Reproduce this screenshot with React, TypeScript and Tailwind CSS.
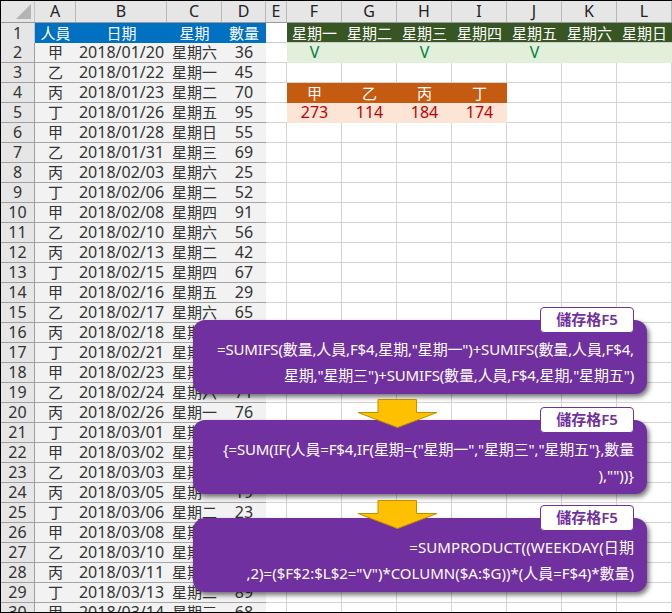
const rows = [
  ["甲", "2018/01/20", "星期六", "36"],
  ["乙", "2018/01/22", "星期一", "45"],
  ["丙", "2018/01/23", "星期二", "70"],
  ["丁", "2018/01/26", "星期五", "95"],
  ["甲", "2018/01/28", "星期日", "55"],
  ["乙", "2018/01/31", "星期三", "69"],
  ["丙", "2018/02/03", "星期六", "25"],
  ["丁", "2018/02/06", "星期二", "52"],
  ["甲", "2018/02/08", "星期四", "91"],
  ["乙", "2018/02/10", "星期六", "56"],
  ["丙", "2018/02/13", "星期二", "42"],
  ["丁", "2018/02/15", "星期四", "67"],
  ["甲", "2018/02/16", "星期五", "29"],
  ["乙", "2018/02/17", "星期六", "65"],
  ["丙", "2018/02/18", "星期日", "38"],
  ["丁", "2018/02/21", "星期三", "44"],
  ["甲", "2018/02/23", "星期五", "60"],
  ["乙", "2018/02/24", "星期六", "71"],
  ["丙", "2018/02/26", "星期一", "76"],
  ["丁", "2018/03/01", "星期四", "33"],
  ["甲", "2018/03/02", "星期五", "48"],
  ["乙", "2018/03/03", "星期六", "57"],
  ["丙", "2018/03/05", "星期一", "19"],
  ["丁", "2018/03/06", "星期二", "23"],
  ["甲", "2018/03/08", "星期四", "62"],
  ["乙", "2018/03/10", "星期六", "41"],
  ["丙", "2018/03/11", "星期日", "54"],
  ["丁", "2018/03/13", "星期二", "89"],
  ["甲", "2018/03/14", "星期三", "68"],
]

const weekdays = ["星期一", "星期二", "星期三", "星期四", "星期五", "星期六", "星期日"]
const letters = ["A", "B", "C", "D", "E", "F", "G", "H", "I", "J", "K", "L"]
const gridCols = "grid grid-cols-[34px_41px_91px_55px_44px_21px_repeat(7,55px)]"

function sideCells(row: number) {
  // the F:L block, only rows 1,2,4,5 have fills
  return weekdays.map((day, i) => {
    if (row === 1)
      return <div key={i} className="h-[19px] bg-[#375623] text-white text-center leading-[20px]">{day}</div>
    if (row === 2)
      return <div key={i} className="h-5 bg-[#e2efda] text-[#00803c] text-[16px] text-center leading-[18px]">{i % 2 === 0 && i < 5 ? "V" : ""}</div>
    if (row === 4 && i < 4)
      return <div key={i} className="h-5 bg-[#c55a11] text-white text-center leading-[20px]">{["甲", "乙", "丙", "丁"][i]}</div>
    if (row === 5 && i < 4)
      return <div key={i} className="h-5 bg-[#fce4d6] text-[#c00000] text-[16px] text-center leading-[19px]">{[273, 114, 184, 174][i]}</div>
    return <div key={i} className="h-5 border-r border-b border-[#d4d4d4]"></div>
  })
}

type Line = { text: string; tracking: string }

function Callout({ top, lines }: { top: string; lines: Line[] }) {
  return (
    <div className={`absolute left-[192px] w-[454px] h-[74px] rounded-xl bg-[#7030a0] pt-4 pr-[13px] text-right text-white text-[15px] leading-[26px] shadow-[2px_3px_5px_rgba(0,0,0,0.55)] ${top}`}>
      {lines.map((l) => (
        <div key={l.text} className={`whitespace-nowrap ${l.tracking}`}>{l.text}</div>
      ))}
      <div className="absolute right-[13px] top-[-13px] w-[94px] h-[26px] rounded-[4px] border border-[#7030a0] bg-white text-center text-[#7030a0] text-[15px] font-semibold leading-[23px]">
        儲存格F5
      </div>
    </div>
  )
}

function Arrow({ top }: { top: string }) {
  return (
    <svg className={`absolute left-[356px] ${top}`} width="82" height="30" viewBox="0 0 82 30">
      <polygon points="21,0.5 59.5,0.5 59.5,13.5 80,13.5 40.5,28.5 1,13.5 21,13.5" fill="#ffc000" stroke="#bf9000" strokeWidth="1" />
    </svg>
  )
}

export default function App() {
  return (
    <div className="relative w-[672px] h-[613px] overflow-hidden border-t border-b border-l border-black bg-white text-[15px] text-[#333333] font-['Noto_Sans','Noto_Sans_CJK_TC',sans-serif]">
      <div className={`${gridCols} h-[22px] bg-[#e6e6e6] border-b border-[#9a9a9a]`}>
        <div className="relative border-r border-[#c4c4c4]">
          <svg className="absolute right-[3px] bottom-[3px]" width="15" height="15" viewBox="0 0 15 15">
            <polygon points="15,0 15,15 0,15" fill="#b4b4b4" />
          </svg>
        </div>
        {letters.map((c) => (
          <div key={c} className="border-r border-[#b8b8b8] text-center text-[16px] leading-[20px] text-[#222222]">{c}</div>
        ))}
      </div>

      <div className={`${gridCols} h-5 border-b border-[#cccccc]`}>
        <div className="bg-[#e6e6e6] border-r border-[#c4c4c4] text-center text-[16px] leading-[20px]">1</div>
        <div className="bg-[#0070c0] text-white text-center leading-[20px]">人員</div>
        <div className="bg-[#0070c0] text-white text-center leading-[20px]">日期</div>
        <div className="bg-[#0070c0] text-white text-center leading-[20px]">星期</div>
        <div className="bg-[#0070c0] text-white text-center leading-[20px]">數量</div>
        <div></div>
        {sideCells(1)}
      </div>

      {rows.map((r, i) => (
        <div key={i} className={`${gridCols} h-5`}>
          <div className="bg-[#e6e6e6] border-r border-b border-[#a0a0a0] text-center text-[16px] leading-[18px]">{i + 2}</div>
          <div className="bg-[#f2f2f2] border-b border-[#a6a6a6] text-center leading-[18px]">{r[0]}</div>
          <div className="bg-[#f2f2f2] border-b border-[#a6a6a6] text-center text-[16px] leading-[18px]">{r[1]}</div>
          <div className="bg-[#f2f2f2] border-b border-[#a6a6a6] text-center leading-[18px]">{r[2]}</div>
          <div className="bg-[#f2f2f2] border-b border-[#a6a6a6] text-center text-[16px] leading-[18px]">{r[3]}</div>
          <div className={i === 0 || i === 2 || i === 3 ? "border-b border-[#d4d4d4]" : "border-r border-b border-[#d4d4d4]"}></div>
          {sideCells(i + 2)}
        </div>
      ))}

      <Callout
        top="top-[319px]"
        lines={[
          { text: '=SUMIFS(數量,人員,F$4,星期,"星期一")+SUMIFS(數量,人員,F$4,', tracking: "tracking-[-0.15px]" },
          { text: '星期,"星期三")+SUMIFS(數量,人員,F$4,星期,"星期五")', tracking: "tracking-[-0.15px]" },
        ]}
      />
      <Callout
        top="top-[419px]"
        lines={[
          { text: '{=SUM(IF(人員=F$4,IF(星期={"星期一","星期三","星期五"},數量', tracking: "tracking-[-0.15px]" },
          { text: '),""))}', tracking: "" },
        ]}
      />
      <Callout
        top="top-[517px]"
        lines={[
          { text: "=SUMPRODUCT((WEEKDAY(日期", tracking: "tracking-[0.1px]" },
          { text: ',2)=($F$2:$L$2="V")*COLUMN($A:$G))*(人員=F$4)*數量)', tracking: "" },
        ]}
      />
      <Arrow top="top-[398px]" />
      <Arrow top="top-[499px]" />
    </div>
  )
}
